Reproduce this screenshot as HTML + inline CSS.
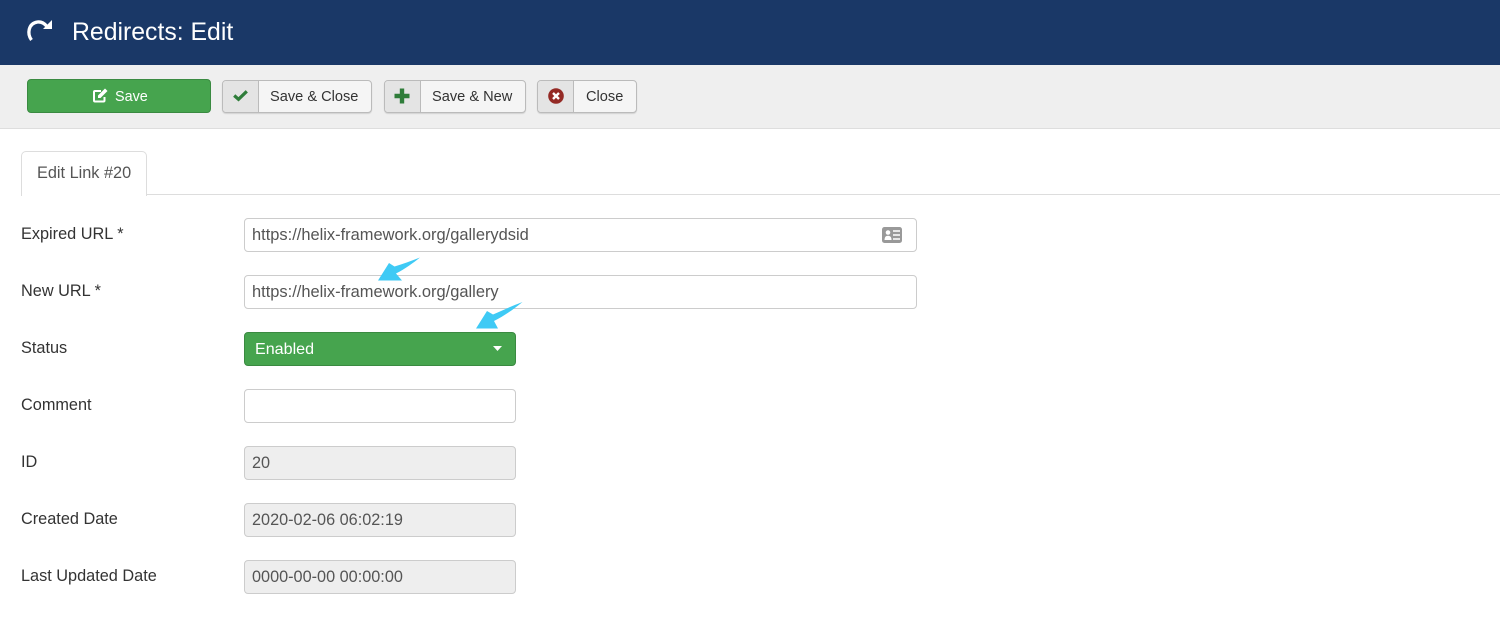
<!DOCTYPE html>
<html lang="en">
<head>
<meta charset="utf-8">
<title>Redirects: Edit</title>
<style>
html,body{margin:0;padding:0;background:#fff}
body{width:1500px;height:641px;position:relative;overflow:hidden;font-family:"Liberation Sans",sans-serif;font-size:16.3px;color:#333}
.a{position:absolute;box-sizing:border-box;white-space:nowrap}
#hd{left:0;top:0;width:1500px;height:65px;background:#1a3867}
#ttl{left:72px;top:17px;font-size:24.8px;line-height:31px;color:#fff}
#tb{left:0;top:65px;width:1500px;height:64px;background:#efefef;border-bottom:1px solid #dedede}
.btn{height:33px;border:1px solid #bbb;border-radius:4px;background:#f5f5f5;box-shadow:0 1px 1px rgba(0,0,0,.12);top:80px;line-height:33px;color:#333;font-size:14.6px}
.ic{left:0;top:0;bottom:0;width:36px;background:#e4e4e4;border-right:1px solid #bbb;border-radius:3px 0 0 3px}
.lb{top:0}
#save{left:27px;top:79px;width:184px;height:34px;background:#46a44e;border:1px solid #3a8a41;border-radius:4px;color:#fff;line-height:34px;font-size:14.4px}
#tab{left:21px;top:151px;width:126px;height:45px;background:#fff;border:1px solid #ddd;border-bottom:0;border-radius:5px 5px 0 0;line-height:43px;padding-left:15px;color:#555}
#tl{left:146px;top:194px;width:1354px;height:1px;background:#ddd}
.l{left:21px;line-height:21px;color:#333}
.i{left:244px;height:34px;border:1px solid #ccc;border-radius:4px;background:#fff;line-height:32px;padding-left:7px;color:#555;font-size:16.45px}
.d{background:#eee;width:272px;font-size:16.25px}
svg{position:absolute;overflow:visible}
</style>
</head>
<body>
<div class="a" id="hd"></div>
<svg style="left:26px;top:18px" width="28" height="24" viewBox="0 0 28 24"><path d="M5.500 22C1 16 2 5.500 11.500 4C15 3.600 18 5 20.500 8" fill="none" stroke="#fff" stroke-width="3.300"/><path d="M26 2V11H17Z" fill="#fff"/></svg>
<div class="a" id="ttl">Redirects: Edit</div>
<div class="a" id="tb"></div>

<div class="a" id="save">
  <svg style="left:65px;top:8px" width="15" height="15" viewBox="0 0 15 15"><path d="M11.500 9V12.500Q11.500 13.500 10.500 13.500H2Q1 13.500 1 12.500V4Q1 3 2 3H8" fill="none" stroke="#fff" stroke-width="2"/><path d="M5 7.500L12 .5L14.500 3L7.500 10H5Z" fill="#fff"/></svg>
  <span class="a" style="left:87px;top:0">Save</span>
</div>

<div class="a btn" style="left:222px;width:150px">
  <div class="a ic"><svg style="left:10px;top:9px" width="15" height="11" viewBox="0 0 15 11"><path d="M1.200 5.500L5.500 9.300L13.800 1.300" fill="none" stroke="#2f7d3a" stroke-width="3.200"/></svg></div>
  <span class="a lb" style="left:47px">Save &amp; Close</span>
</div>
<div class="a btn" style="left:384px;width:142px">
  <div class="a ic"><svg style="left:9px;top:7px" width="16" height="16" viewBox="0 0 16 16"><path d="M8 .5V15.500M.5 8H15.500" stroke="#2f7d3a" stroke-width="4.400" fill="none"/></svg></div>
  <span class="a lb" style="left:47px">Save &amp; New</span>
</div>
<div class="a btn" style="left:537px;width:100px">
  <div class="a ic"><svg style="left:10px;top:7px" width="16" height="16" viewBox="0 0 16 16"><circle cx="8" cy="8" r="7.800" fill="#942a25"/><path d="M5 5L11 11M11 5L5 11" stroke="#fff" stroke-width="2.400"/></svg></div>
  <span class="a lb" style="left:48px">Close</span>
</div>

<div class="a" id="tab">Edit Link #20</div>
<div class="a" id="tl"></div>

<div class="a l" style="top:224px">Expired URL *</div>
<div class="a i" style="top:218px;width:673px">https://helix-framework.org/gallerydsid
  <svg style="left:637px;top:8px" width="20" height="16" viewBox="0 0 20 16"><rect width="20" height="16" rx="2.500" fill="#999"/><circle cx="6" cy="5.500" r="2.300" fill="#fff"/><path d="M2.500 13Q2.500 8.800 6 8.800T9.500 13Z" fill="#fff"/><path d="M11 4H18M11 8H18M11 12H18" stroke="#fff" stroke-width="1.600"/></svg>
</div>

<div class="a l" style="top:281px">New URL *</div>
<div class="a i" style="top:275px;width:673px">https://helix-framework.org/gallery</div>

<div class="a l" style="top:338px">Status</div>
<div class="a" style="left:244px;top:332px;width:272px;height:34px;background:#46a44e;border:1px solid #3a8a41;border-radius:4px;color:#fff;line-height:32px;padding-left:10px;font-size:16.1px">Enabled
  <svg style="left:248px;top:13px" width="9" height="5" viewBox="0 0 9 5"><path d="M0 0H9L4.500 5Z" fill="#fff"/></svg>
</div>

<div class="a l" style="top:395px">Comment</div>
<div class="a i" style="top:389px;width:272px"></div>

<div class="a l" style="top:452px">ID</div>
<div class="a i d" style="top:446px">20</div>

<div class="a l" style="top:509px">Created Date</div>
<div class="a i d" style="top:503px">2020-02-06 06:02:19</div>

<div class="a l" style="top:566px">Last Updated Date</div>
<div class="a i d" style="top:560px">0000-00-00 00:00:00</div>

<svg style="left:376px;top:256px" width="46" height="26" viewBox="0 0 46 26"><path d="M2 24.500L13 7L18.500 10.500C27 8 35 5 44 1.500C37 7 29 13 20 17.500L26 24.500Z" fill="#3fcaf5"/></svg>
<svg style="left:474px;top:301px" width="50" height="29" viewBox="0 0 50 29"><path d="M2 27.500L13 10L19 13.500C29 9 38 5 48.500 1C40 8 30 15 20 20L24 27.500Z" fill="#3fcaf5"/></svg>
</body>
</html>
